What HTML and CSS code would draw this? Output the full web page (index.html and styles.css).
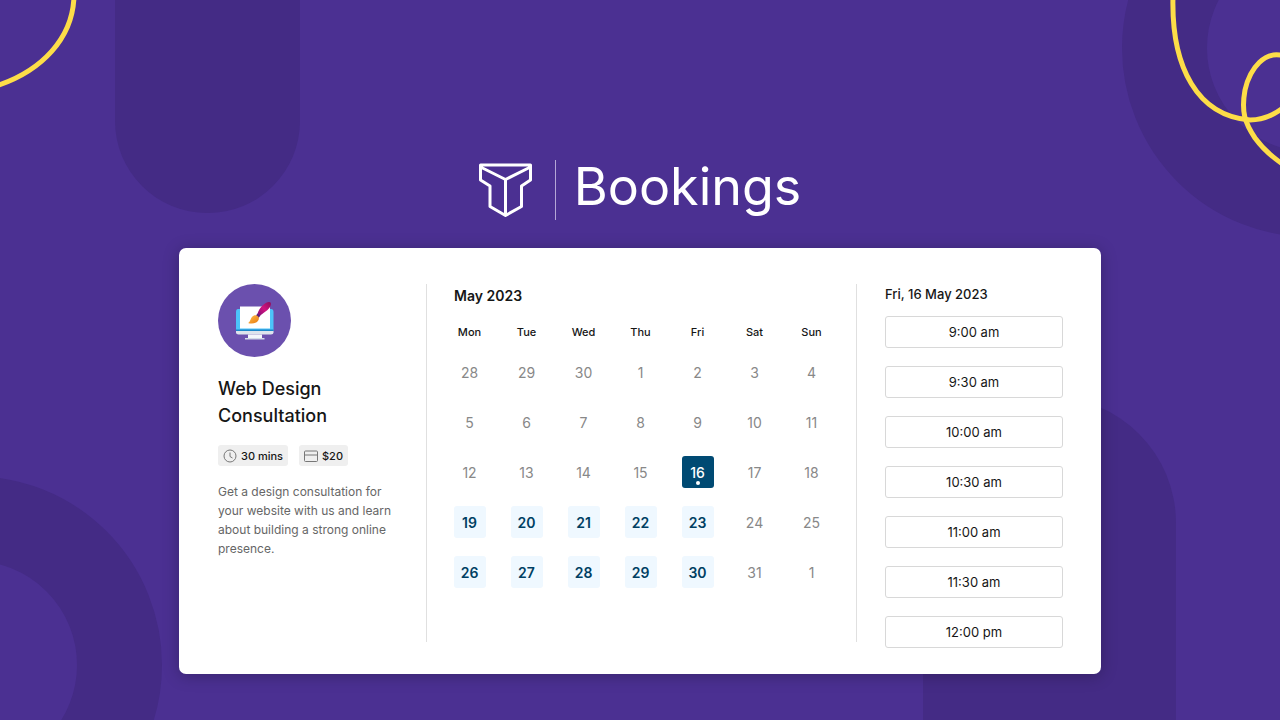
FILE: index.html
```html
<!DOCTYPE html>
<html lang="en">
<head>
    <meta charset="UTF-8">
    <meta name="viewport" content="width=device-width, initial-scale=1.0">
    <title>Bookings - Web Design Consultation</title>
    <link rel="stylesheet" href="styles.css">
</head>
<body>

    <!-- Background shapes -->
    <svg class="backdrop" viewBox="0 0 1280 720" preserveAspectRatio="xMidYMid slice" aria-hidden="true">
        <rect class="shade" x="115" y="-100" width="185" height="313" rx="92"/>
        <rect class="shade" x="923" y="397" width="253" height="450" rx="126"/>
        <circle class="ring" cx="-27" cy="665" r="146.5"/>
        <circle class="ring" cx="1311" cy="48" r="146.5"/>
        <path class="ribbon" d="M74 -4C73 38 42 71 -4 86"/>
        <path class="ribbon" d="M1173 -4C1171 68 1198 116 1250 120C1262 120 1273 116 1284 107"/>
        <path class="ribbon" d="M1284 56C1265 50 1250 68 1245 90C1241 112 1245 123 1255 138C1263 149 1272 157 1284 165"/>
    </svg>

    <main class="page">
        <header class="brand">
            <svg class="brand-logo" viewBox="0 0 54 54" aria-hidden="true">
                <path d="M2 2H51.500V17L42.500 23V43.500L26.500 52.500L11 43.500V23L1.500 17V2ZM1.500 4L26.500 16.500L51.500 4M26.500 16.500V52"/>
            </svg>
            <h1>Bookings</h1>
        </header>

        <div class="card">
            <!-- Service -->
            <section class="service">
                <svg class="service-icon" viewBox="0 0 73 73" aria-hidden="true">
                    <defs>
                        <linearGradient id="handle" x1="0" y1="1" x2="1" y2="0">
                            <stop offset="0" stop-color="#7d0f78"/>
                            <stop offset="0.500" stop-color="#d0137f"/>
                            <stop offset="1" stop-color="#8c0d5c"/>
                        </linearGradient>
                        <linearGradient id="bristle" x1="0" y1="0" x2="1" y2="1">
                            <stop offset="0" stop-color="#ffc04a"/>
                            <stop offset="1" stop-color="#e87810"/>
                        </linearGradient>
                    </defs>
                    <circle cx="36.500" cy="36.500" r="36.500" fill="#6b50ae"/>
                    <path d="M20 25H53Q55.500 25 55.500 28V47H18V28Q18 25 20 25Z" fill="#4cc3fa"/>
                    <path d="M18 45.500H55.500V47H18Z" fill="#1b86c8"/>
                    <path d="M22 22.500H52V44.500H22Z" fill="#fff"/>
                    <path d="M18 47H55.500V48.500Q55.500 50.500 53 50.500H20.500Q18 50.500 18 48.500Z" fill="#dde3ed"/>
                    <path d="M30 50.500H44V54H30Z" fill="#f4f6fb"/>
                    <path d="M27 54H46.500V55.500H27Z" fill="#d3d9e8"/>
                    <path d="M39.500 30C41 24 47 18 51 18C54.500 18 53 23 49.500 26C47 28 44 30 41.500 32Z" fill="url(#handle)"/>
                    <path d="M39.500 29.500L42.500 31.500L40.500 34L38 31.500Z" fill="#59207c"/>
                    <path d="M30 39C33 38 32 33 36 31.500C39 30.500 42 33 40.500 36C38.500 40 33 40 30 39Z" fill="url(#bristle)"/>
                </svg>
                <h2>Web Design Consultation</h2>
                <ul class="tags">
                    <li>
                        <svg class="tag-icon" viewBox="0 0 14 14" aria-hidden="true">
                            <circle cx="7" cy="7" r="6"/>
                            <path d="M7 3.500V7.500L9.500 9"/>
                        </svg>
                        30 mins
                    </li>
                    <li>
                        <svg class="tag-icon" viewBox="0 0 14 14" aria-hidden="true">
                            <rect x="0.500" y="2" width="13" height="10.500" rx="1"/>
                            <path d="M0.500 6H13.500"/>
                        </svg>
                        $20
                    </li>
                </ul>
                <p>Get a design consultation for your website with us and learn about building a strong online presence.</p>
            </section>

            <!-- Calendar -->
            <section class="calendar">
                <h3>May 2023</h3>
                <table>
                    <thead>
                        <tr>
                            <th>Mon</th>
                            <th>Tue</th>
                            <th>Wed</th>
                            <th>Thu</th>
                            <th>Fri</th>
                            <th>Sat</th>
                            <th>Sun</th>
                        </tr>
                    </thead>
                    <tbody>
                        <tr>
                            <td>28</td>
                            <td>29</td>
                            <td>30</td>
                            <td>1</td>
                            <td>2</td>
                            <td>3</td>
                            <td>4</td>
                        </tr>
                        <tr>
                            <td>5</td>
                            <td>6</td>
                            <td>7</td>
                            <td>8</td>
                            <td>9</td>
                            <td>10</td>
                            <td>11</td>
                        </tr>
                        <tr>
                            <td>12</td>
                            <td>13</td>
                            <td>14</td>
                            <td>15</td>
                            <td><button class="day selected" type="button">16</button></td>
                            <td>17</td>
                            <td>18</td>
                        </tr>
                        <tr>
                            <td><button class="day" type="button">19</button></td>
                            <td><button class="day" type="button">20</button></td>
                            <td><button class="day" type="button">21</button></td>
                            <td><button class="day" type="button">22</button></td>
                            <td><button class="day" type="button">23</button></td>
                            <td>24</td>
                            <td>25</td>
                        </tr>
                        <tr>
                            <td><button class="day" type="button">26</button></td>
                            <td><button class="day" type="button">27</button></td>
                            <td><button class="day" type="button">28</button></td>
                            <td><button class="day" type="button">29</button></td>
                            <td><button class="day" type="button">30</button></td>
                            <td>31</td>
                            <td>1</td>
                        </tr>
                    </tbody>
                </table>
            </section>

            <!-- Time slots -->
            <section class="slots">
                <h3>Fri, 16 May 2023</h3>
                <div class="slot-list">
                    <button class="slot" type="button">9:00 am</button>
                    <button class="slot" type="button">9:30 am</button>
                    <button class="slot" type="button">10:00 am</button>
                    <button class="slot" type="button">10:30 am</button>
                    <button class="slot" type="button">11:00 am</button>
                    <button class="slot" type="button">11:30 am</button>
                    <button class="slot" type="button">12:00 pm</button>
                </div>
            </section>
        </div>
    </main>

</body>
</html>
```
FILE: styles.css
```css
* {
    box-sizing: border-box;
}
body {
    margin: 0;
    min-height: 100vh;
    background-color: #4b3092;
    color: #161616;
    font-family: Inter, "Liberation Sans", sans-serif;
}
h1, h2, h3, p, ul {
    margin: 0;
    padding: 0;
}
button {
    font-family: inherit;
    cursor: pointer;
}
/* Background */
.backdrop {
    position: absolute;
    top: 0;
    left: 0;
    width: 100%;
    height: 100%;
    z-index: -1;
}
.shade {
    fill: #442b85;
}
.ring {
    fill: none;
    stroke: #442b85;
    stroke-width: 85;
}
.ribbon {
    fill: none;
    stroke: #fddd48;
    stroke-width: 5;
}
.page {
    display: flex;
    flex-direction: column;
    align-items: center;
    padding: 160px 24px 24px;
}
/* Brand */
.brand {
    display: flex;
    align-items: center;
    margin-bottom: 28px;
    color: white;
}
.brand-logo {
    width: 54px;
    height: 54px;
    margin-right: 22px;
    fill: none;
    stroke: white;
    stroke-width: 3;
    stroke-linejoin: round;
}
.brand h1 {
    padding: 0 0 6px 18px;
    border-left: 1px solid #b4a6d6;
    font-size: 52px;
    font-weight: 400;
    line-height: 54px;
}
/* Card */
.card {
    display: grid;
    grid-template-columns: 248px 430px 1fr;
    width: 100%;
    max-width: 922px;
    padding: 36px 0 26px;
    background-color: white;
    border-radius: 7px;
    box-shadow: 0 2px 16px rgba(0, 0, 0, 0.25);
}
.service, .calendar {
    margin-bottom: 6px;
    border-right: 1px solid #e0e0e0;
}
/* Service */
.service {
    padding: 0 28px 0 39px;
}
.service-icon {
    display: block;
    width: 73px;
    height: 73px;
}
.service h2 {
    margin-top: 18px;
    font-size: 18px;
    font-weight: 500;
    line-height: 27px;
}
.tags {
    display: flex;
    gap: 11px;
    margin-top: 16px;
    list-style: none;
}
.tags li {
    display: flex;
    align-items: center;
    gap: 4px;
    height: 21px;
    padding: 0 5px;
    background-color: #efefef;
    border-radius: 3px;
    font-size: 11px;
    font-weight: 500;
}
.tag-icon {
    width: 14px;
    height: 14px;
    fill: none;
    stroke: #777;
}
.service p {
    margin-top: 16px;
    color: #666;
    font-size: 12px;
    line-height: 19px;
}
/* Calendar */
.calendar {
    padding: 0 16px 0 14px;
}
.calendar h3 {
    padding-left: 13px;
    font-size: 14px;
    font-weight: 600;
    line-height: 24px;
}
.calendar table {
    width: 100%;
    margin-top: 14px;
    border-collapse: collapse;
    table-layout: fixed;
    text-align: center;
}
.calendar th {
    height: 20px;
    padding: 0;
    font-size: 11px;
    font-weight: 500;
}
.calendar td {
    height: 50px;
    padding: 0;
    color: #888;
    font-size: 14px;
}
.calendar thead::after {
    content: "";
    display: block;
    height: 5px;
}
.day {
    position: relative;
    display: block;
    width: 32px;
    height: 32px;
    margin: 0 auto;
    padding: 0;
    background-color: #eff8ff;
    border: none;
    border-radius: 3px;
    color: #003f63;
    font-size: 14px;
    font-weight: 600;
}
.day.selected {
    background-color: #004a73;
    color: white;
    font-weight: 500;
}
.day.selected::after {
    content: "";
    position: absolute;
    bottom: 3px;
    left: 14px;
    width: 4px;
    height: 4px;
    background-color: white;
    border-radius: 50%;
}
/* Time slots */
.slots {
    padding: 0 38px 0 28px;
}
.slots h3 {
    font-size: 13px;
    font-weight: 500;
    line-height: 20px;
}
.slot-list {
    display: flex;
    flex-direction: column;
    gap: 18px;
    margin-top: 12px;
}
.slot {
    height: 32px;
    background-color: white;
    border: 1px solid #d8d8d8;
    border-radius: 3px;
    color: #161616;
    font-size: 13px;
}
```
